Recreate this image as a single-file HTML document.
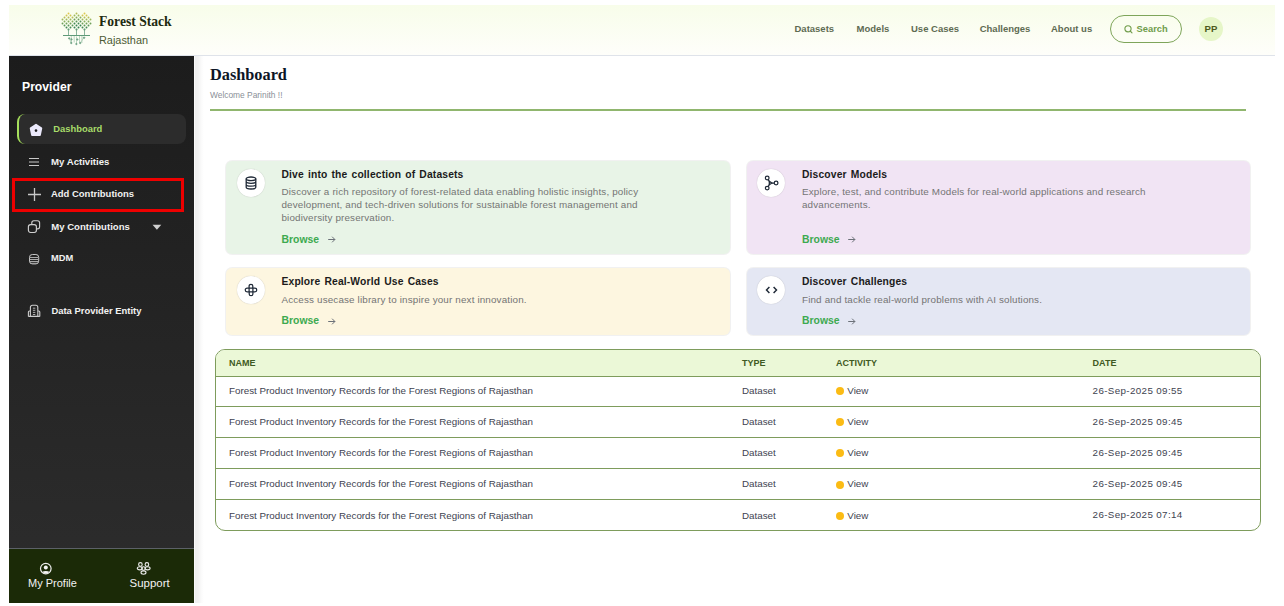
<!DOCTYPE html>
<html><head><meta charset="utf-8">
<style>
*{box-sizing:border-box;margin:0;padding:0}
html,body{width:1284px;height:606px;overflow:hidden;background:#fff;font-family:"Liberation Sans",sans-serif}
.abs{position:absolute}
#hdr{left:9px;top:5px;width:1266px;height:51px;background:linear-gradient(180deg,#f8fdea,#fefefa);border-bottom:1px solid #dfe3ea}
#side{left:9px;top:56px;width:185px;height:547px;background:linear-gradient(180deg,#1c1c1c,#2d2d2d)}
#foot{left:9px;top:548px;width:185px;height:55px;background:#1b2a07;border-top:1px solid #5c6168}
#shadow{left:194px;top:56px;width:12px;height:547px;background:linear-gradient(90deg,#fafafa 0,#fafafa 1px,#efefef 1px,#f2f2f2 4px,#fcfcfc 8px,#fff 10px)}
.t{position:absolute;white-space:nowrap;line-height:1}
.nav{top:24px;font-size:9.5px;font-weight:bold;color:#5e6b52}
.si{font-size:9.5px;font-weight:bold;color:#f2f2f2}
.ic{position:absolute}
.card{position:absolute;border-radius:6px;box-shadow:0 0 0 1px rgba(0,0,0,.055)}
.circ{position:absolute;width:28px;height:28px;border-radius:50%;background:#fff;box-shadow:0 0 1px rgba(0,0,0,.25)}
.ct{font-size:10.3px;letter-spacing:.15px;word-spacing:1.1px;font-weight:bold;color:#1b1b1b}
.cd{position:absolute;font-size:9.85px;letter-spacing:.15px;line-height:12.7px;color:#747474;width:372px}
.br{font-size:10.4px;font-weight:bold;color:#3daa50}
.ar{position:absolute}
#tbl{left:215px;top:349px;width:1046px;height:182px;border:1px solid #7e9c5c;border-radius:10px;overflow:hidden}
#th{position:absolute;left:0;top:0;width:100%;height:27px;background:#ebf8d7;border-bottom:1px solid #7e9c5c}
.rl{position:absolute;left:0;width:100%;height:1px;background:#7e9c5c}
.hh{font-size:9px;font-weight:bold;color:#3f5a22}
.td{font-size:9.8px;color:#3e4350}
.dot{position:absolute;width:8px;height:8px;border-radius:50%;background:#fbbb14}
</style></head><body>
<div id="hdr" class="abs"></div>
<div id="side" class="abs"></div>
<div id="foot" class="abs"></div>
<div id="shadow" class="abs"></div>

<!-- logo -->
<svg class="ic" style="left:56px;top:8px" width="40" height="40" viewBox="56 8 40 40">
<circle cx="62.5" cy="19.5" r=".95" fill="#9db75d"/><circle cx="62.5" cy="23.5" r=".95" fill="#6fa05a"/><circle cx="64.5" cy="17.5" r=".95" fill="#b7be58"/><circle cx="64.5" cy="21.5" r=".95" fill="#86ad5d"/><circle cx="64.5" cy="25.5" r=".95" fill="#589458"/><circle cx="66.5" cy="15.5" r=".95" fill="#d1c452"/><circle cx="66.5" cy="19.5" r=".95" fill="#9db75d"/><circle cx="66.5" cy="23.5" r=".95" fill="#6fa05a"/><circle cx="66.5" cy="27.5" r=".95" fill="#428856"/><circle cx="68.5" cy="13.5" r=".95" fill="#dec850"/><circle cx="68.5" cy="17.5" r=".95" fill="#b7be58"/><circle cx="68.5" cy="21.5" r=".95" fill="#86ad5d"/><circle cx="68.5" cy="25.5" r=".95" fill="#589458"/><circle cx="68.5" cy="29.5" r=".95" fill="#378255"/><circle cx="70.5" cy="15.5" r=".95" fill="#d1c452"/><circle cx="70.5" cy="19.5" r=".95" fill="#9db75d"/><circle cx="70.5" cy="23.5" r=".95" fill="#6fa05a"/><circle cx="70.5" cy="27.5" r=".95" fill="#428856"/><circle cx="72.5" cy="17.5" r=".95" fill="#b7be58"/><circle cx="72.5" cy="21.5" r=".95" fill="#86ad5d"/><circle cx="72.5" cy="25.5" r=".95" fill="#589458"/><circle cx="74.5" cy="15.5" r=".95" fill="#9bb75d"/><circle cx="74.5" cy="19.5" r=".95" fill="#6d9f5a"/><circle cx="74.5" cy="23.5" r=".95" fill="#408655"/><circle cx="74.5" cy="27.5" r=".95" fill="#378255"/><circle cx="76.5" cy="13.5" r=".95" fill="#b4bd58"/><circle cx="76.5" cy="17.5" r=".95" fill="#83ac5d"/><circle cx="76.5" cy="21.5" r=".95" fill="#569358"/><circle cx="76.5" cy="25.5" r=".95" fill="#378255"/><circle cx="76.5" cy="29.5" r=".95" fill="#378255"/><circle cx="78.5" cy="15.5" r=".95" fill="#9bb75d"/><circle cx="78.5" cy="19.5" r=".95" fill="#6d9f5a"/><circle cx="78.5" cy="23.5" r=".95" fill="#408655"/><circle cx="78.5" cy="27.5" r=".95" fill="#378255"/><circle cx="80.5" cy="17.5" r=".95" fill="#83ac5d"/><circle cx="80.5" cy="21.5" r=".95" fill="#569358"/><circle cx="80.5" cy="25.5" r=".95" fill="#378255"/><circle cx="82.5" cy="15.5" r=".95" fill="#d1c452"/><circle cx="82.5" cy="19.5" r=".95" fill="#9db75d"/><circle cx="82.5" cy="23.5" r=".95" fill="#6fa05a"/><circle cx="82.5" cy="27.5" r=".95" fill="#428856"/><circle cx="84.5" cy="13.5" r=".95" fill="#dec850"/><circle cx="84.5" cy="17.5" r=".95" fill="#b7be58"/><circle cx="84.5" cy="21.5" r=".95" fill="#86ad5d"/><circle cx="84.5" cy="25.5" r=".95" fill="#589458"/><circle cx="84.5" cy="29.5" r=".95" fill="#378255"/><circle cx="86.5" cy="15.5" r=".95" fill="#d1c452"/><circle cx="86.5" cy="19.5" r=".95" fill="#9db75d"/><circle cx="86.5" cy="23.5" r=".95" fill="#6fa05a"/><circle cx="86.5" cy="27.5" r=".95" fill="#428856"/><circle cx="88.5" cy="17.5" r=".95" fill="#b7be58"/><circle cx="88.5" cy="21.5" r=".95" fill="#86ad5d"/><circle cx="88.5" cy="25.5" r=".95" fill="#589458"/><circle cx="90.5" cy="19.5" r=".95" fill="#9db75d"/><circle cx="90.5" cy="23.5" r=".95" fill="#6fa05a"/>
<g stroke="#6fa285" stroke-width=".8" fill="none">
<path d="M68.5 29V35M76.5 29V35M84.5 29V35"/>
<path d="M63 35.5H90" stroke="#5f9a78" stroke-width="1"/>
<path d="M71.3 36V43.3M74.2 36V42.5M76.5 36.5V44.3M79.5 36V42.5M81.9 36V43M69 37.5L71.3 43M84 37L80.5 43" stroke="#a9cbb2" stroke-width=".8"/><g fill="#6fa283"><circle cx="69.2" cy="38.4" r=".7"/><circle cx="71.5" cy="39.4" r=".7"/><circle cx="77.3" cy="39.5" r=".7"/><circle cx="84.1" cy="37.7" r=".75"/><circle cx="71.3" cy="43" r=".7"/><circle cx="76.4" cy="44" r=".7"/><circle cx="80.2" cy="43" r=".7"/></g>
</g>
</svg>
<div class="t" style="left:99px;top:14.5px;font-family:'Liberation Serif',serif;font-weight:bold;font-size:13.6px;color:#1d2a10">Forest Stack</div>
<div class="t" style="left:99px;top:34.5px;font-size:10.9px;color:#4b5a33">Rajasthan</div>

<!-- nav -->
<div class="t nav" style="left:794.5px">Datasets</div>
<div class="t nav" style="left:856.6px">Models</div>
<div class="t nav" style="left:911px">Use Cases</div>
<div class="t nav" style="left:979.7px">Challenges</div>
<div class="t nav" style="left:1051px">About us</div>
<div class="abs" style="left:1110px;top:15px;width:72px;height:28px;border:1.3px solid #7ea55a;border-radius:14px"></div>
<svg class="ic" style="left:1123px;top:24px" width="11" height="11" viewBox="0 0 11 11"><circle cx="5" cy="4.8" r="3.1" fill="none" stroke="#6f9c4a" stroke-width="1.1"/><path d="M7.2 7L9 8.8" stroke="#6f9c4a" stroke-width="1.1" stroke-linecap="round"/></svg>
<div class="t" style="left:1136.5px;top:25px;font-size:9.35px;font-weight:bold;color:#6f9c4a">Search</div>
<div class="abs" style="left:1199px;top:17px;width:24px;height:24px;border-radius:50%;background:#e6f6c8"></div>
<div class="t" style="left:1204.6px;top:24.1px;font-size:9.6px;font-weight:bold;color:#4d5a1c">PP</div>

<!-- sidebar -->
<div class="t" style="left:22px;top:80.7px;font-size:12.2px;font-weight:bold;color:#fff">Provider</div>
<div class="abs" style="left:17px;top:114px;width:169px;height:30px;border-radius:8px;background:#2c2c2c;border-left:2px solid #a6e05c"></div>
<svg class="ic" style="left:29px;top:123px" width="14" height="14" viewBox="0 0 14 14"><path d="M7 1.6L12.4 5.3 11 12.1H3L1.6 5.3Z" fill="#ebe9fb" stroke="#ebe9fb" stroke-width="1.7" stroke-linejoin="round"/><circle cx="7" cy="7.6" r="1.3" fill="#1a1a1a"/></svg>
<div class="t si" style="left:53.3px;top:124.2px;color:#a8dc6a;font-size:9.4px">Dashboard</div>

<svg class="ic" style="left:28px;top:157px" width="12" height="10" viewBox="0 0 12 10"><path d="M1 1.5H11M1 5H11M1 8.5H11" stroke="#c9c9c9" stroke-width="1"/></svg>
<div class="t si" style="left:51.1px;top:156.9px;font-size:9.6px">My Activities</div>

<svg class="ic" style="left:27px;top:187px" width="15" height="15" viewBox="0 0 15 15"><path d="M7.5 1V14M1 7.5H14" stroke="#c8c8c8" stroke-width="1.3"/></svg>
<div class="t si" style="left:51px;top:188.7px;font-size:9.46px">Add Contributions</div>
<div class="abs" style="left:12px;top:178px;width:172px;height:34px;border:3px solid #ee0000"></div>

<svg class="ic" style="left:27px;top:219px" width="14" height="15" viewBox="0 0 14 15"><rect x="1.4" y="5.6" width="8" height="7.9" rx="2.2" fill="none" stroke="#cfcfcf" stroke-width="1.15"/><path d="M4.8 5.6V3.8a2.1 2.1 0 0 1 2.1-2.1h3.6a2.1 2.1 0 0 1 2.1 2.1v3.9a2.1 2.1 0 0 1-2.1 2.1H9.4" fill="none" stroke="#cfcfcf" stroke-width="1.15"/></svg>
<div class="t si" style="left:51.2px;top:221.9px;font-size:9.57px">My Contributions</div>
<svg class="ic" style="left:152px;top:224px" width="10" height="7" viewBox="0 0 10 7"><path d="M.5 .8H9.3L4.9 5.8Z" fill="#cfcfcf"/></svg>

<svg class="ic" style="left:28px;top:253px" width="13" height="13" viewBox="0 0 13 13"><rect x="1.5" y="1.5" width="9.2" height="9.4" rx="2.8" fill="none" stroke="#c4c4c4" stroke-width="1"/><path d="M2 4.5H10.2M1.8 6.5H10.4M1.8 8.5H10.4M2.2 10.3H10" stroke="#a8a8a8" stroke-width="1"/></svg>
<div class="t si" style="left:51px;top:253.8px;font-size:9.3px">MDM</div>

<svg class="ic" style="left:27px;top:304px" width="14" height="14" viewBox="0 0 14 14"><path d="M3.4 12.4V3.2a2 2 0 0 1 2-2h3.4a2 2 0 0 1 2 2V12.4M3.4 7H2.4a1 1 0 0 0-1 1V12.4M10.8 7H11.8a1 1 0 0 1 1 1V12.4M1.4 12.4H12.8" fill="none" stroke="#cdcdcd" stroke-width="1.1"/><path d="M5.9 4.2H8.3M5.9 6.3H8.3M5.9 8.4H8.3M5.9 10.5H8.3" stroke="#bdbdbd" stroke-width=".9"/></svg>
<div class="t si" style="left:51.4px;top:305.8px;font-size:9.44px">Data Provider Entity</div>

<!-- footer -->
<svg class="ic" style="left:38px;top:561px" width="16" height="16" viewBox="0 0 16 16"><defs><clipPath id="pc"><circle cx="7.8" cy="7.6" r="4.9"/></clipPath></defs><circle cx="7.8" cy="7.6" r="5.3" fill="none" stroke="#ededed" stroke-width="1.2"/><circle cx="7.8" cy="6.6" r="2" fill="#f4f4f4"/><ellipse cx="7.8" cy="13" rx="4.4" ry="3.1" fill="#f4f4f4" clip-path="url(#pc)"/></svg>
<div class="t" style="left:28px;top:577.5px;font-size:11px;color:#f2f2f2">My Profile</div>
<svg class="ic" style="left:135px;top:559px" width="16" height="17" viewBox="0 0 16 17"><g fill="none" stroke="#ececec" stroke-width="1.1"><circle cx="5.4" cy="5.4" r="1.8"/><ellipse cx="4.8" cy="9.3" rx="2.5" ry="1.6"/><circle cx="11.9" cy="5.4" r="1.8"/><ellipse cx="12.6" cy="9.3" rx="2.5" ry="1.6"/><circle cx="8.5" cy="9.5" r="1.8"/><ellipse cx="8.5" cy="13.6" rx="2.5" ry="1.7"/></g></svg>
<div class="t" style="left:129.6px;top:578px;font-size:11.45px;color:#f2f2f2">Support</div>

<!-- main -->
<div class="t" style="left:210px;top:67px;font-family:'Liberation Serif',serif;font-weight:bold;font-size:16.3px;color:#0d1526">Dashboard</div>
<div class="t" style="left:210px;top:90.9px;font-size:8.4px;color:#8a8f98">Welcome Parinith !!</div>
<div class="abs" style="left:210px;top:109px;width:1036px;height:2px;background:#90b66e"></div>

<!-- cards -->
<div class="card" style="left:226px;top:161px;width:504px;height:93px;background:#e8f4e7"></div>
<div class="card" style="left:747px;top:161px;width:503px;height:93px;background:#f1e4f4"></div>
<div class="card" style="left:226px;top:268px;width:504px;height:67px;background:#fdf6e0"></div>
<div class="card" style="left:747px;top:268px;width:503px;height:67px;background:#e4e7f3"></div>

<div class="circ" style="left:237px;top:169px"></div>
<div class="circ" style="left:757px;top:169px"></div>
<div class="circ" style="left:237px;top:276px"></div>
<div class="circ" style="left:757px;top:276px"></div>

<svg class="ic" style="left:244px;top:176px" width="14" height="14" viewBox="0 0 14 14"><g fill="none" stroke="#1f2937" stroke-width="1.3"><ellipse cx="7" cy="2.8" rx="4.8" ry="1.8"/><path d="M2.2 2.8V11.2a4.8 1.8 0 0 0 9.6 0V2.8M2.2 5.6a4.8 1.8 0 0 0 9.6 0M2.2 8.4a4.8 1.8 0 0 0 9.6 0"/></g></svg>
<svg class="ic" style="left:764px;top:175.4px" width="15" height="16" viewBox="0 0 15 16"><g fill="none" stroke="#1f2937" stroke-width="1.25" stroke-linejoin="round"><circle cx="3.2" cy="3" r="1.85"/><circle cx="3.2" cy="13.1" r="1.85"/><circle cx="12.1" cy="8" r="1.85"/><path d="M5.3 6.4V9.6L8 8Z"/><path d="M4.2 4.6L5.3 6.4M4.2 11.5L5.3 9.6M8 8H10.2"/></g></svg>
<svg class="ic" style="left:243px;top:282px" width="16" height="16" viewBox="0 0 16 16"><path d="M6.1 9.9V4.1A1.85 1.85 0 0 1 9.8 4.1V6.2M6.1 6.2H11.9A1.85 1.85 0 0 1 11.9 9.9H9.8M9.9 6.1V11.9A1.85 1.85 0 0 1 6.2 11.9V9.8M9.9 9.8H4.1A1.85 1.85 0 0 1 4.1 6.1H6.2" fill="none" stroke="#1f2937" stroke-width="1.25"/></svg>
<svg class="ic" style="left:764px;top:285px" width="15" height="10" viewBox="0 0 15 10"><path d="M5.4 2L2.5 5 5.4 8M9.6 2L12.5 5 9.6 8" fill="none" stroke="#1f2937" stroke-width="1.45"/></svg>

<div class="t ct" style="left:281.5px;top:169.6px">Dive into the collection of Datasets</div>
<div class="cd" style="left:281.5px;top:186.4px">Discover a rich repository of forest-related data enabling holistic insights, policy development, and tech-driven solutions for sustainable forest management and biodiversity preservation.</div>
<div class="t br" style="left:281.5px;top:234.9px">Browse</div>
<svg class="ar" style="left:327px;top:235px" width="10" height="9" viewBox="0 0 10 9"><path d="M1.2 4.5H7.9M5.1 1.7L7.9 4.5 5.1 7.3" fill="none" stroke="#6b7078" stroke-width="1"/></svg>

<div class="t ct" style="left:802px;top:169.6px">Discover Models</div>
<div class="cd" style="left:802px;top:186.4px">Explore, test, and contribute Models for real-world applications and research advancements.</div>
<div class="t br" style="left:802px;top:234.9px">Browse</div>
<svg class="ar" style="left:847px;top:235px" width="10" height="9" viewBox="0 0 10 9"><path d="M1.2 4.5H7.9M5.1 1.7L7.9 4.5 5.1 7.3" fill="none" stroke="#6b7078" stroke-width="1"/></svg>

<div class="t ct" style="left:281.5px;top:277.1px">Explore Real-World Use Cases</div>
<div class="cd" style="left:281.5px;top:293.8px">Access usecase library to inspire your next innovation.</div>
<div class="t br" style="left:281.5px;top:316.4px">Browse</div>
<svg class="ar" style="left:327px;top:316.5px" width="10" height="9" viewBox="0 0 10 9"><path d="M1.2 4.5H7.9M5.1 1.7L7.9 4.5 5.1 7.3" fill="none" stroke="#6b7078" stroke-width="1"/></svg>

<div class="t ct" style="left:802px;top:277.1px">Discover Challenges</div>
<div class="cd" style="left:802px;top:293.8px">Find and tackle real-world problems with AI solutions.</div>
<div class="t br" style="left:802px;top:316.4px">Browse</div>
<svg class="ar" style="left:847px;top:316.5px" width="10" height="9" viewBox="0 0 10 9"><path d="M1.2 4.5H7.9M5.1 1.7L7.9 4.5 5.1 7.3" fill="none" stroke="#6b7078" stroke-width="1"/></svg>

<!-- table -->
<div id="tbl" class="abs">
<div id="th"></div>
<div class="rl" style="top:56px"></div>
<div class="rl" style="top:87px"></div>
<div class="rl" style="top:118px"></div>
<div class="rl" style="top:149px"></div>
</div>
<div class="t hh" style="left:229px;top:358.7px">NAME</div>
<div class="t hh" style="left:742px;top:358.7px">TYPE</div>
<div class="t hh" style="left:836px;top:358.7px">ACTIVITY</div>
<div class="t hh" style="left:1092.6px;top:358.7px">DATE</div>

<div class="t td" style="left:229px;top:386.1px">Forest Product Inventory Records for the Forest Regions of Rajasthan</div>
<div class="t td" style="left:742px;top:386.1px">Dataset</div>
<div class="dot" style="left:836px;top:387.2px"></div>
<div class="t td" style="left:847.3px;top:386.1px">View</div>
<div class="t td" style="left:1092.6px;top:385.8px;font-size:9.8px;letter-spacing:.36px">26-Sep-2025 09:55</div>
<div class="t td" style="left:229px;top:417.2px">Forest Product Inventory Records for the Forest Regions of Rajasthan</div>
<div class="t td" style="left:742px;top:417.2px">Dataset</div>
<div class="dot" style="left:836px;top:418.3px"></div>
<div class="t td" style="left:847.3px;top:417.2px">View</div>
<div class="t td" style="left:1092.6px;top:416.9px;font-size:9.8px;letter-spacing:.36px">26-Sep-2025 09:45</div>
<div class="t td" style="left:229px;top:448.3px">Forest Product Inventory Records for the Forest Regions of Rajasthan</div>
<div class="t td" style="left:742px;top:448.3px">Dataset</div>
<div class="dot" style="left:836px;top:449.4px"></div>
<div class="t td" style="left:847.3px;top:448.3px">View</div>
<div class="t td" style="left:1092.6px;top:448.0px;font-size:9.8px;letter-spacing:.36px">26-Sep-2025 09:45</div>
<div class="t td" style="left:229px;top:479.4px">Forest Product Inventory Records for the Forest Regions of Rajasthan</div>
<div class="t td" style="left:742px;top:479.4px">Dataset</div>
<div class="dot" style="left:836px;top:480.5px"></div>
<div class="t td" style="left:847.3px;top:479.4px">View</div>
<div class="t td" style="left:1092.6px;top:479.1px;font-size:9.8px;letter-spacing:.36px">26-Sep-2025 09:45</div>
<div class="t td" style="left:229px;top:510.5px">Forest Product Inventory Records for the Forest Regions of Rajasthan</div>
<div class="t td" style="left:742px;top:510.5px">Dataset</div>
<div class="dot" style="left:836px;top:511.6px"></div>
<div class="t td" style="left:847.3px;top:510.5px">View</div>
<div class="t td" style="left:1092.6px;top:510.2px;font-size:9.8px;letter-spacing:.36px">26-Sep-2025 07:14</div>
</body></html>
